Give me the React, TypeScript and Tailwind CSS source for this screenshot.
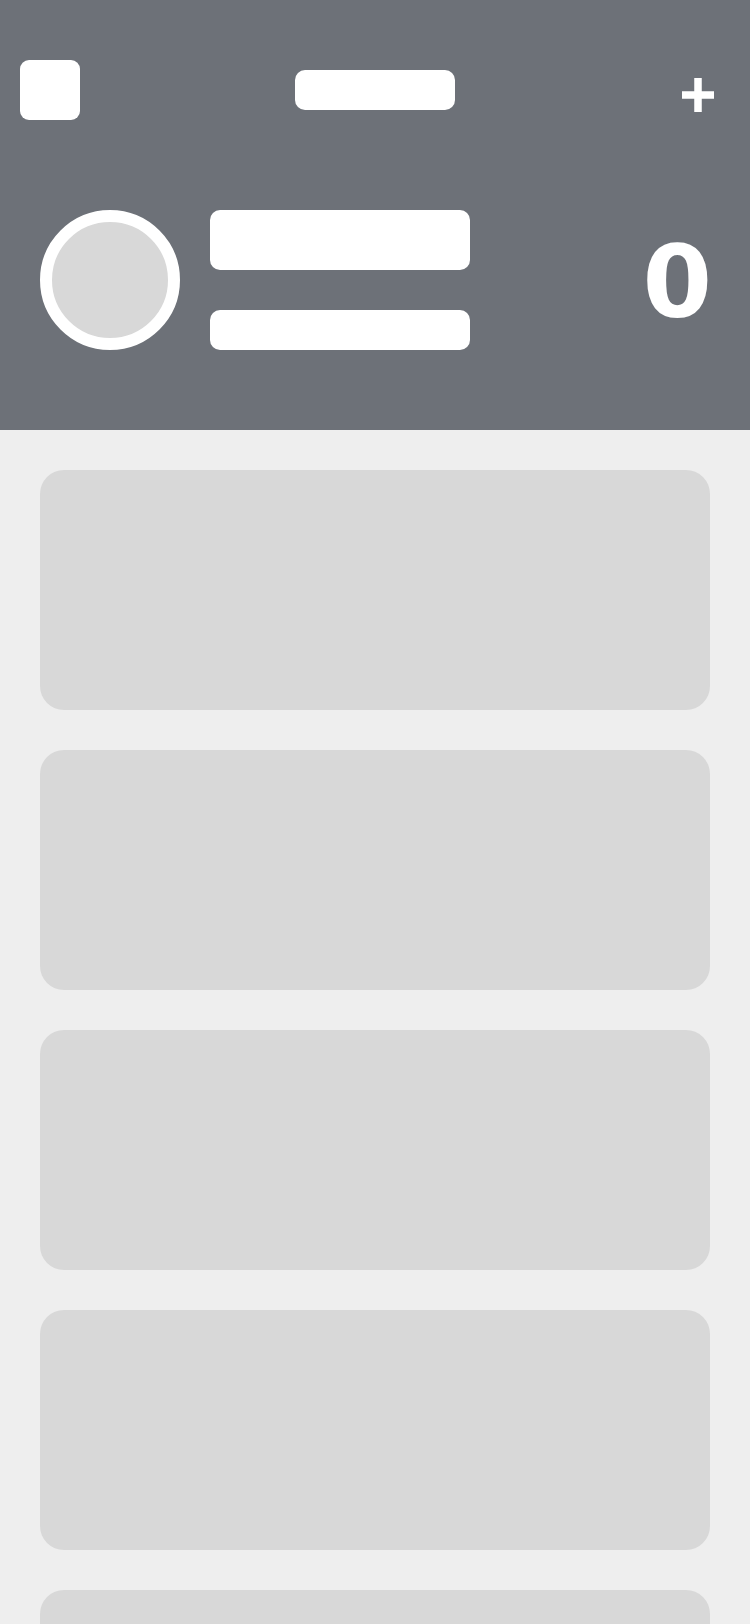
import React from "react";

const Card = () => <div className="h-[240px] w-full shrink-0 rounded-[24px] bg-[#d8d8d8]" />;

export default function App() {
  return (
    <div className="flex h-[1624px] w-[750px] flex-col overflow-hidden bg-[#eeeeee] font-['DejaVu_Sans',sans-serif]">
      <header className="flex h-[430px] shrink-0 flex-col bg-[#6d7178]">
        <div className="mt-[60px] grid h-[60px] grid-cols-[1fr_auto_1fr] items-center px-[20px]">
          <div className="h-[60px] w-[60px] rounded-[9px] bg-white" />
          <div className="h-[40px] w-[160px] rounded-[10px] bg-white" />
          <div className="mr-[16px] mt-[10px] justify-self-end">
            <svg width="32" height="34" viewBox="0 0 32 34" className="block">
              <path d="M16 0v34M0 17h32" stroke="white" strokeWidth="7.5" />
            </svg>
          </div>
        </div>
        <div className="mt-[90px] flex items-center px-[40px]">
          <div className="h-[140px] w-[140px] rounded-full border-[12px] border-white bg-[#d8d8d8]" />
          <div className="ml-[30px] flex flex-col">
            <div className="h-[60px] w-[260px] rounded-[10px] bg-white" />
            <div className="mt-[40px] h-[40px] w-[260px] rounded-[10px] bg-white" />
          </div>
          <span className="ml-auto mr-[-2px] mt-[6px] text-[100px] font-bold leading-none text-white">0</span>
        </div>
      </header>
      <main className="flex flex-col gap-[40px] px-[40px] pt-[40px]">
        <Card />
        <Card />
        <Card />
        <Card />
        <Card />
      </main>
    </div>
  );
}
